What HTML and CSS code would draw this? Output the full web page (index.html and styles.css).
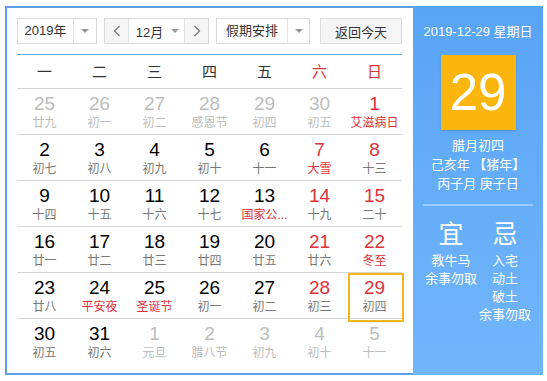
FILE: index.html
```html
<!DOCTYPE html>
<html lang="zh-CN">
<head>
<meta charset="utf-8">
<title>日历</title>
<link rel="stylesheet" href="styles.css">
</head>
<body>
<div class="cal">
  <div class="main">
    <div class="controls">
      <div class="sel sel-year"><span class="sel-text">2019年</span><span class="sel-arrow"><i class="tri"></i></span></div>
      <div class="sel sel-month">
        <span class="nav"><svg width="8" height="12" viewBox="0 0 8 12"><path d="M6.5 1 L1.5 6 L6.5 11" fill="none" stroke="#777" stroke-width="1.2"/></svg></span>
        <span class="month-mid"><span>12月</span><i class="tri"></i></span>
        <span class="nav"><svg width="8" height="12" viewBox="0 0 8 12"><path d="M1.5 1 L6.5 6 L1.5 11" fill="none" stroke="#777" stroke-width="1.2"/></svg></span>
      </div>
      <div class="sel sel-hol"><span class="sel-text">假期安排</span><span class="sel-arrow"><i class="tri"></i></span></div>
      <div class="btn">返回今天</div>
    </div>
    <div class="week-head">
      <span>一</span><span>二</span><span>三</span><span>四</span><span>五</span><span class="red">六</span><span class="red">日</span>
    </div>
    <div class="weeks">
      <div class="week">
        <div class="day other"><b>25</b><em>廿九</em></div>
        <div class="day other"><b>26</b><em>初一</em></div>
        <div class="day other"><b>27</b><em>初二</em></div>
        <div class="day other"><b>28</b><em>感恩节</em></div>
        <div class="day other"><b>29</b><em>初四</em></div>
        <div class="day other"><b>30</b><em>初五</em></div>
        <div class="day"><b class="red">1</b><em class="red">艾滋病日</em></div>
      </div>
      <div class="week">
        <div class="day"><b>2</b><em>初七</em></div>
        <div class="day"><b>3</b><em>初八</em></div>
        <div class="day"><b>4</b><em>初九</em></div>
        <div class="day"><b>5</b><em>初十</em></div>
        <div class="day"><b>6</b><em>十一</em></div>
        <div class="day"><b class="red">7</b><em class="red">大雪</em></div>
        <div class="day"><b class="red">8</b><em>十三</em></div>
      </div>
      <div class="week">
        <div class="day"><b>9</b><em>十四</em></div>
        <div class="day"><b>10</b><em>十五</em></div>
        <div class="day"><b>11</b><em>十六</em></div>
        <div class="day"><b>12</b><em>十七</em></div>
        <div class="day"><b>13</b><em class="red">国家公...</em></div>
        <div class="day"><b class="red">14</b><em>十九</em></div>
        <div class="day"><b class="red">15</b><em>二十</em></div>
      </div>
      <div class="week">
        <div class="day"><b>16</b><em>廿一</em></div>
        <div class="day"><b>17</b><em>廿二</em></div>
        <div class="day"><b>18</b><em>廿三</em></div>
        <div class="day"><b>19</b><em>廿四</em></div>
        <div class="day"><b>20</b><em>廿五</em></div>
        <div class="day"><b class="red">21</b><em>廿六</em></div>
        <div class="day"><b class="red">22</b><em class="red">冬至</em></div>
      </div>
      <div class="week">
        <div class="day"><b>23</b><em>廿八</em></div>
        <div class="day"><b>24</b><em class="red">平安夜</em></div>
        <div class="day"><b>25</b><em class="red">圣诞节</em></div>
        <div class="day"><b>26</b><em>初一</em></div>
        <div class="day"><b>27</b><em>初二</em></div>
        <div class="day"><b class="red">28</b><em>初三</em></div>
        <div class="day today"><b class="red">29</b><em>初四</em></div>
      </div>
      <div class="week">
        <div class="day"><b>30</b><em>初五</em></div>
        <div class="day"><b>31</b><em>初六</em></div>
        <div class="day other"><b>1</b><em>元旦</em></div>
        <div class="day other"><b>2</b><em>腊八节</em></div>
        <div class="day other"><b>3</b><em>初九</em></div>
        <div class="day other"><b>4</b><em>初十</em></div>
        <div class="day other"><b>5</b><em>十一</em></div>
      </div>
    </div>
  </div>
  <div class="side">
    <div class="side-date">2019-12-29 星期日</div>
    <div class="big-day">29</div>
    <div class="lunar">
      <div>腊月初四</div>
      <div>己亥年 【猪年】</div>
      <div>丙子月 庚子日</div>
    </div>
    <div class="divider"></div>
    <div class="yiji">
      <div class="col">
        <div class="yj-title">宜</div>
        <div>教牛马</div>
        <div>余事勿取</div>
      </div>
      <div class="col">
        <div class="yj-title">忌</div>
        <div>入宅</div>
        <div>动土</div>
        <div>破土</div>
        <div>余事勿取</div>
      </div>
    </div>
  </div>
</div>
</body>
</html>
```
FILE: styles.css
```css
* { box-sizing: border-box; }
html, body { margin: 0; padding: 0; background: #fff; }
body {
  font-family: "Liberation Sans", "Noto Sans CJK SC", sans-serif;
  color: #333;
}
.cal {
  display: flex;
  margin: 6px 0 0 5px;
  width: 538px;
  height: 369px;
}
.main {
  width: 408px;
  border: 2px solid #5d9fe8;
  border-right: none;
  padding: 10px 11px 0 10px;
}
.controls {
  display: flex;
  height: 26px;
  font-size: 13px;
}
.sel {
  display: flex;
  border: 1px solid #d9d9d9;
  height: 26px;
  background: #fff;
}
.sel-year { width: 80px; margin-right: 7px; }
.sel-year .sel-text { width: 55px; }
.sel-month { width: 105px; margin-right: 7px; }
.sel-hol { width: 94px; margin-right: 10px; }
.sel-hol .sel-text { width: 70px; }
.sel-text {
  display: flex;
  align-items: center;
  justify-content: center;
  line-height: 24px;
}
.sel-arrow {
  flex: 1;
  display: flex;
  align-items: center;
  justify-content: center;
  border-left: 1px solid #e3e3e3;
}
.tri {
  display: block;
  width: 0;
  height: 0;
  border-left: 4px solid transparent;
  border-right: 4px solid transparent;
  border-top: 4px solid #999;
}
.nav {
  width: 23px;
  display: flex;
  align-items: center;
  justify-content: center;
  background: #f5f5f5;
}
.month-mid {
  flex: 1;
  display: flex;
  align-items: center;
  justify-content: center;
  gap: 8px;
  border-left: 1px solid #e3e3e3;
  border-right: 1px solid #e3e3e3;
  padding-left: 2px;
}
.btn {
  width: 82px;
  height: 26px;
  border: 1px solid #ddd;
  background: #f5f5f5;
  display: flex;
  align-items: center;
  justify-content: center;
}
.week-head {
  margin-top: 10px;
  border-top: 1px solid #6aa8ea;
  border-bottom: 1px solid #d6d6d6;
  display: grid;
  grid-template-columns: repeat(7, 55px);
  height: 35px;
  font-size: 15px;
  color: #333;
}
.week-head span {
  text-align: center;
  line-height: 33px;
}
.red { color: #e0323a !important; }
.week {
  display: grid;
  grid-template-columns: repeat(7, 55px);
  height: 46px;
  border-bottom: 1px solid #d6d6d6;
}
.week:last-child { border-bottom: none; }
.day {
  position: relative;
  text-align: center;
  padding-top: 4px;
}
.day b {
  display: block;
  font-weight: normal;
  font-size: 19px;
  line-height: 22px;
  color: #000;
}
.day em {
  display: block;
  font-style: normal;
  font-size: 12px;
  line-height: 16px;
  color: #777;
  white-space: nowrap;
}
.day.other b, .day.other em { color: #bdbdbd; }
.day.today::after {
  content: "";
  position: absolute;
  left: 1px;
  top: 0;
  width: 52px;
  height: 45px;
  border: 2px solid #f6b51a;
}
.side {
  width: 130px;
  background: linear-gradient(#58a4f5, #72b6fb);
  color: #fff;
  font-size: 13px;
  text-align: center;
  padding-top: 17px;
}
.side-date { line-height: 18px; }
.big-day {
  width: 75px;
  height: 75px;
  margin: 14px auto 0;
  background: #fbb50f;
  box-shadow: 0 1px 2px rgba(0,0,0,0.15);
  font-size: 51px;
  line-height: 75px;
}
.lunar {
  margin-top: 6px;
  line-height: 19px;
}
.divider {
  height: 2px;
  margin: 11px 10px 0;
  background: rgba(255,255,255,0.35);
}
.yiji {
  display: flex;
  justify-content: center;
  margin-top: 14px;
  line-height: 18px;
}
.col { width: 54px; }
.yj-title {
  font-size: 25px;
  line-height: 28px;
  margin-bottom: 4px;
}
```
